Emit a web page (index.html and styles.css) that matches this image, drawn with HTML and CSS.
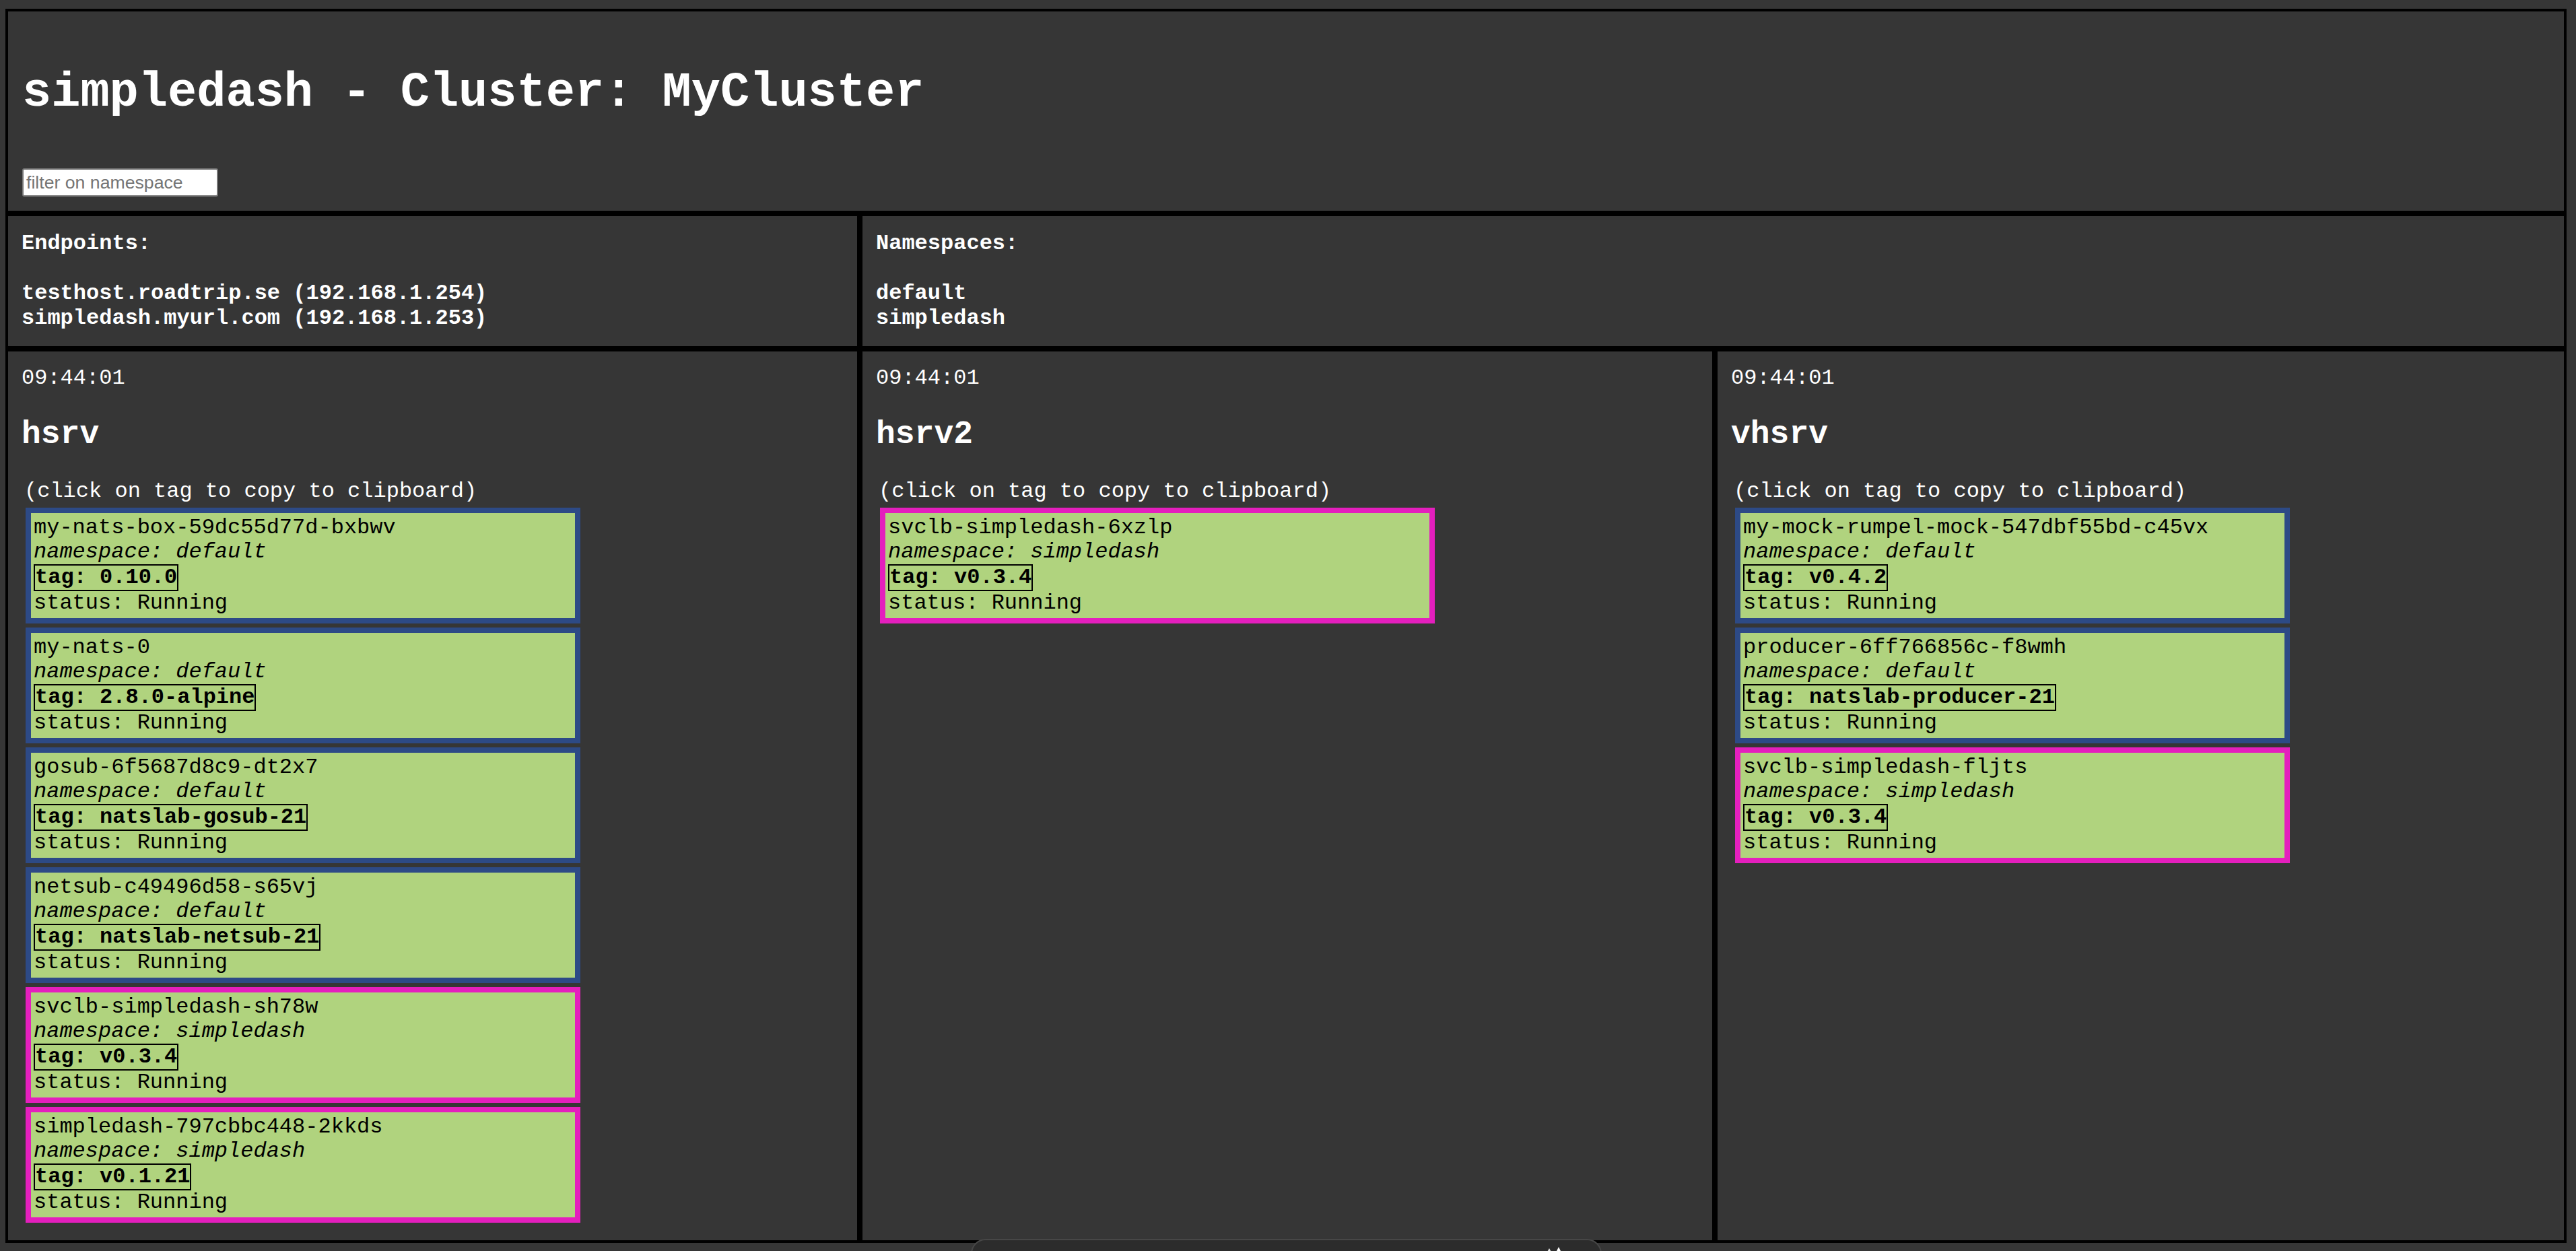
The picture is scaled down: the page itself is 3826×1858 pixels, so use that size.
FILE: index.html
```html
<!DOCTYPE html>
<html lang="en">
<head>
<meta charset="utf-8">
<title>simpledash</title>
<link rel="stylesheet" href="styles.css">
</head>
<body>
<div class="dash">
  <header class="cell head">
    <h1 class="title">simpledash - Cluster: MyCluster</h1>
    <input class="filter" type="text" placeholder="filter on namespace">
  </header>

  <section class="cell info">
    <b>Endpoints:</b><br><br>
    <b>testhost.roadtrip.se (192.168.1.254)</b><br>
    <b>simpledash.myurl.com (192.168.1.253)</b>
  </section>

  <section class="cell info wide">
    <b>Namespaces:</b><br><br>
    <b>default</b><br>
    <b>simpledash</b>
  </section>

  <section class="cell host">
    <div class="time">09:44:01</div>
    <h2 class="hostname">hsrv</h2>
    <div class="pods">
      <div class="hint">(click on tag to copy to clipboard)</div>
      <div class="pod ns-default">
        <div class="line">my-nats-box-59dc55d77d-bxbwv</div>
        <div class="line ns">namespace: default</div>
        <div class="tag">tag: 0.10.0</div>
        <div class="line">status: Running</div>
      </div>
      <div class="pod ns-default">
        <div class="line">my-nats-0</div>
        <div class="line ns">namespace: default</div>
        <div class="tag">tag: 2.8.0-alpine</div>
        <div class="line">status: Running</div>
      </div>
      <div class="pod ns-default">
        <div class="line">gosub-6f5687d8c9-dt2x7</div>
        <div class="line ns">namespace: default</div>
        <div class="tag">tag: natslab-gosub-21</div>
        <div class="line">status: Running</div>
      </div>
      <div class="pod ns-default">
        <div class="line">netsub-c49496d58-s65vj</div>
        <div class="line ns">namespace: default</div>
        <div class="tag">tag: natslab-netsub-21</div>
        <div class="line">status: Running</div>
      </div>
      <div class="pod ns-simpledash">
        <div class="line">svclb-simpledash-sh78w</div>
        <div class="line ns">namespace: simpledash</div>
        <div class="tag">tag: v0.3.4</div>
        <div class="line">status: Running</div>
      </div>
      <div class="pod ns-simpledash">
        <div class="line">simpledash-797cbbc448-2kkds</div>
        <div class="line ns">namespace: simpledash</div>
        <div class="tag">tag: v0.1.21</div>
        <div class="line">status: Running</div>
      </div>
    </div>
  </section>

  <section class="cell host">
    <div class="time">09:44:01</div>
    <h2 class="hostname">hsrv2</h2>
    <div class="pods">
      <div class="hint">(click on tag to copy to clipboard)</div>
      <div class="pod ns-simpledash">
        <div class="line">svclb-simpledash-6xzlp</div>
        <div class="line ns">namespace: simpledash</div>
        <div class="tag">tag: v0.3.4</div>
        <div class="line">status: Running</div>
      </div>
    </div>
  </section>

  <section class="cell host">
    <div class="time">09:44:01</div>
    <h2 class="hostname">vhsrv</h2>
    <div class="pods">
      <div class="hint">(click on tag to copy to clipboard)</div>
      <div class="pod ns-default">
        <div class="line">my-mock-rumpel-mock-547dbf55bd-c45vx</div>
        <div class="line ns">namespace: default</div>
        <div class="tag">tag: v0.4.2</div>
        <div class="line">status: Running</div>
      </div>
      <div class="pod ns-default">
        <div class="line">producer-6ff766856c-f8wmh</div>
        <div class="line ns">namespace: default</div>
        <div class="tag">tag: natslab-producer-21</div>
        <div class="line">status: Running</div>
      </div>
      <div class="pod ns-simpledash">
        <div class="line">svclb-simpledash-fljts</div>
        <div class="line ns">namespace: simpledash</div>
        <div class="tag">tag: v0.3.4</div>
        <div class="line">status: Running</div>
      </div>
    </div>
  </section>
</div>

<div class="overlay-bar">
  <svg class="overlay-icon" width="40" height="20" viewBox="0 0 40 20">
    <path d="M4 20 L12 6 L20 20 Z" fill="#e8e8e8"/>
    <path d="M18 20 L26 4 L34 20 Z" fill="#ffffff"/>
  </svg>
</div>
</body>
</html>
```

FILE: styles.css
```css
html, body {
  height: 1858px;
  overflow: hidden;
}

body {
  margin: 13px 0 0 8px;
  background: #363636;
  color: #ffffff;
  font-family: "Liberation Mono", monospace;
  font-size: 32px;
  line-height: 36px;
  position: relative;
}

.dash {
  width: 3804px;
  display: grid;
  grid-template-columns: 1269px 1270px 1265px;
  grid-template-rows: 304px 201px auto;
}

.cell {
  box-sizing: border-box;
  border: 4px solid #000000;
  background: #363636;
}

.head {
  grid-column: 1 / 4;
  padding: 20px 20px 21px 21px;
}

.title {
  margin: 60px 0 71px 0;
  font-size: 72px;
  line-height: 82px;
  font-weight: bold;
  color: #ffffff;
}

.filter {
  display: block;
  box-sizing: border-box;
  width: 291px;
  height: 42px;
  margin: 0;
  padding: 2px 4px;
  border: 2px solid #767676;
  border-radius: 3px;
  background: #ffffff;
  font-family: "Liberation Sans", Arial, sans-serif;
  font-size: 26.67px;
  color: #000000;
}

.filter::placeholder {
  color: #757575;
}

.info {
  padding: 22px 20px 23px 20px;
  line-height: 37px;
}

.wide {
  grid-column: 2 / 4;
}

.host {
  padding: 22px 20px 20px 20px;
}

.time {
  line-height: 36px;
}

.hostname {
  margin: 38px 0 40px 0;
  font-size: 48px;
  line-height: 54px;
  font-weight: bold;
}

.pods {
  padding: 0 6px 6px 6px;
}

.hint {
  line-height: 36px;
  margin-left: -2px;
}

.pod {
  box-sizing: border-box;
  width: 824px;
  margin-top: 6px;
  padding: 4px;
  border: 8px solid #2d4a86;
  background: #b0d37e;
  color: #000000;
}

.pod.ns-simpledash {
  border-color: #e41fbd;
}

.line {
  line-height: 36px;
  white-space: nowrap;
}

.ns {
  font-style: italic;
}

.tag {
  width: fit-content;
  border: 2px solid #000000;
  font-weight: bold;
  line-height: 36px;
  white-space: nowrap;
}

.overlay-bar {
  position: absolute;
  left: 1434px;
  top: 1827px;
  width: 937px;
  height: 50px;
  box-sizing: border-box;
  background: #2c2c2c;
  border: 2px solid #474747;
  border-radius: 22px 22px 0 0;
}

.overlay-icon {
  position: absolute;
  left: 845px;
  top: 6px;
}
```
